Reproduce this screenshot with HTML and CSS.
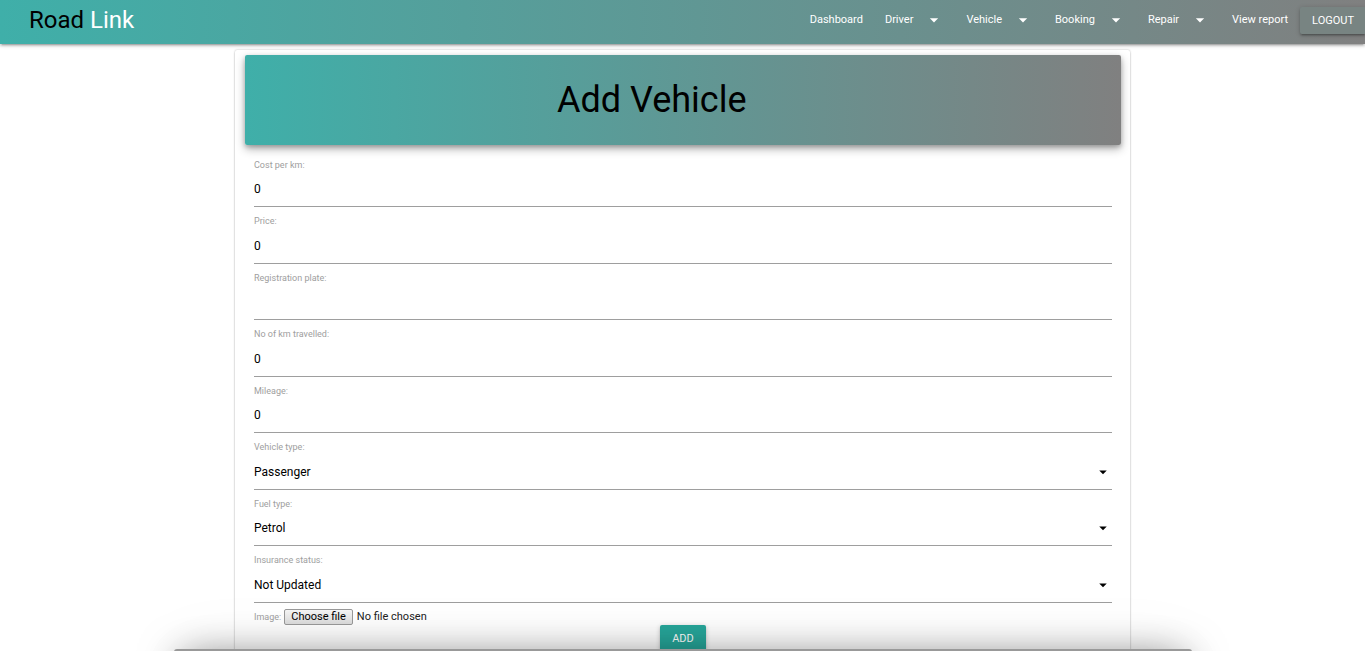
FILE: index.html
```html
<!DOCTYPE html>
<html lang="en">
<head>
<meta charset="utf-8">
<title>Road Link</title>
<link rel="stylesheet" href="styles.css">
</head>
<body>
<header class="navbar">
  <a class="brand" href="#"><span class="brand-dark">Road</span> Link</a>
  <nav class="nav-links">
    <a href="#">Dashboard</a>
    <a href="#">Driver<svg class="caret" viewBox="0 0 24 24" aria-hidden="true"><path d="M7 10l5 5 5-5z"/></svg></a>
    <a href="#">Vehicle<svg class="caret" viewBox="0 0 24 24" aria-hidden="true"><path d="M7 10l5 5 5-5z"/></svg></a>
    <a href="#">Booking<svg class="caret" viewBox="0 0 24 24" aria-hidden="true"><path d="M7 10l5 5 5-5z"/></svg></a>
    <a href="#">Repair<svg class="caret" viewBox="0 0 24 24" aria-hidden="true"><path d="M7 10l5 5 5-5z"/></svg></a>
    <a href="#">View report</a>
    <button class="logout" type="button">LOGOUT</button>
  </nav>
</header>
<main class="card">
  <div class="banner"><h1>Add Vehicle</h1></div>
  <form class="form">
    <div class="field"><label for="cost">Cost per km:</label><input id="cost" type="text" value="0"></div>
    <div class="field"><label for="price">Price:</label><input id="price" type="text" value="0"></div>
    <div class="field"><label for="plate">Registration plate:</label><input id="plate" type="text"></div>
    <div class="field"><label for="km">No of km travelled:</label><input id="km" type="text" value="0"></div>
    <div class="field"><label for="mileage">Mileage:</label><input id="mileage" type="text" value="0"></div>
    <div class="field"><label for="vtype">Vehicle type:</label>
      <div class="select"><select id="vtype"><option>Passenger</option></select><svg class="caret" viewBox="0 0 24 24" aria-hidden="true"><path d="M7 10l5 5 5-5z"/></svg></div></div>
    <div class="field"><label for="fuel">Fuel type:</label>
      <div class="select"><select id="fuel"><option>Petrol</option></select><svg class="caret" viewBox="0 0 24 24" aria-hidden="true"><path d="M7 10l5 5 5-5z"/></svg></div></div>
    <div class="field"><label for="insurance">Insurance status:</label>
      <div class="select"><select id="insurance"><option>Not Updated</option></select><svg class="caret" viewBox="0 0 24 24" aria-hidden="true"><path d="M7 10l5 5 5-5z"/></svg></div></div>
    <div class="file-row">
      <label for="image">Image:</label>
      <div class="file">
        <span class="file-button">Choose file</span>
        <span>No file chosen</span>
        <input id="image" type="file">
      </div>
    </div>
    <button class="add" type="submit">ADD</button>
  </form>
</main>
<div class="bottom-sheet"></div>
</body>
</html>
```
FILE: styles.css
```css
* { box-sizing: border-box; }

body {
  margin: 0;
  height: 100vh;
  overflow: hidden;
  font-family: Roboto, sans-serif;
  background: #fff;
  color: #000;
}

.navbar {
  display: flex;
  align-items: center;
  justify-content: space-between;
  height: 44px;
  padding: 0 0 4px 29px;
  background: linear-gradient(to right, #3fafa9, #808080);
  box-shadow: 0 2px 2px rgba(0, 0, 0, .14), 0 3px 1px -2px rgba(0, 0, 0, .12), 0 1px 5px rgba(0, 0, 0, .2);
}

.brand {
  color: #fff;
  font-size: 24px;
  line-height: 40px;
  text-decoration: none;
}

.brand-dark { color: #000; }

.nav-links {
  display: flex;
  align-items: center;
  height: 40px;
}

.nav-links a {
  display: flex;
  align-items: center;
  padding: 0 11px;
  color: #fff;
  font-size: 11px;
  line-height: 40px;
  text-decoration: none;
}

.caret {
  width: 20px;
  height: 20px;
  fill: currentColor;
}

.nav-links .caret { margin-left: 11px; }

.logout, .add {
  height: 27px;
  border: 0;
  border-radius: 2px;
  color: #fff;
  font-family: inherit;
  font-size: 11px;
  box-shadow: 0 2px 2px rgba(0, 0, 0, .14), 0 3px 1px -2px rgba(0, 0, 0, .12), 0 1px 5px rgba(0, 0, 0, .2);
}

.logout {
  margin: 0 -1px 0 1px;
  padding: 0 12px;
  background: #788482;
}

.card {
  width: 66%;
  max-width: 895px;
  margin: 6px auto 0;
  padding: 5px 9px 20px 10px;
  border-radius: 2px;
  box-shadow: 0 2px 2px rgba(0, 0, 0, .14), 0 3px 1px -2px rgba(0, 0, 0, .12), 0 0 2px rgba(0, 0, 0, .3);
}

.banner {
  padding: 24px 0 24px 312px;
  border-radius: 2px;
  background: linear-gradient(to right, #3fafa9, #808080);
  box-shadow: 0 4px 10px rgba(0, 0, 0, .3), 0 2px 4px rgba(0, 0, 0, .2);
}

.banner h1 {
  margin: 0;
  font-size: 36px;
  font-weight: 400;
  line-height: 42px;
}

.form {
  display: flex;
  flex-direction: column;
  padding: 6px 9px 0;
}

.field {
  display: flex;
  flex-direction: column;
  justify-content: space-between;
  height: 56px;
}

.field:nth-child(even) { height: 57px; }

.field label, .file-row label {
  color: #9e9e9e;
  font-size: 9px;
}

.field label {
  padding-top: 8px;
  line-height: 12px;
}

.field input, .field select {
  width: 100%;
  height: 34px;
  padding: 0 0 2px;
  border: 0;
  border-bottom: 1px solid #9e9e9e;
  border-radius: 0;
  background: transparent;
  color: #000;
  font-family: inherit;
  font-size: 12px;
  outline: 0;
  appearance: none;
}

.select {
  display: grid;
  align-items: center;
}

.select > * { grid-area: 1 / 1; }

.select .caret {
  width: 18px;
  height: 18px;
  margin-bottom: 2px;
  justify-self: end;
  pointer-events: none;
}

.file-row {
  display: flex;
  align-items: center;
  gap: 3px;
  height: 22px;
  padding-top: 6px;
}

.file {
  position: relative;
  display: flex;
  align-items: center;
  gap: 4px;
  font-size: 11px;
  line-height: 14px;
  color: #222;
}

.file-button {
  padding: 0 6px;
  border: 1px solid #999;
  border-radius: 2px;
  background: linear-gradient(#f5f5f5, #ddd);
  color: #000;
}

.file input {
  position: absolute;
  inset: 0;
  width: 100%;
  opacity: 0;
}

.add {
  align-self: center;
  padding: 0 12px;
  background: #26a69a;
}

.bottom-sheet {
  position: fixed;
  right: 173px;
  bottom: -58px;
  left: 174px;
  height: 60px;
  border-radius: 3px;
  background: #999;
  box-shadow: 0 0 40px -8px rgba(0, 0, 0, .5), 0 0 70px rgba(0, 0, 0, .06);
  pointer-events: none;
}
```
